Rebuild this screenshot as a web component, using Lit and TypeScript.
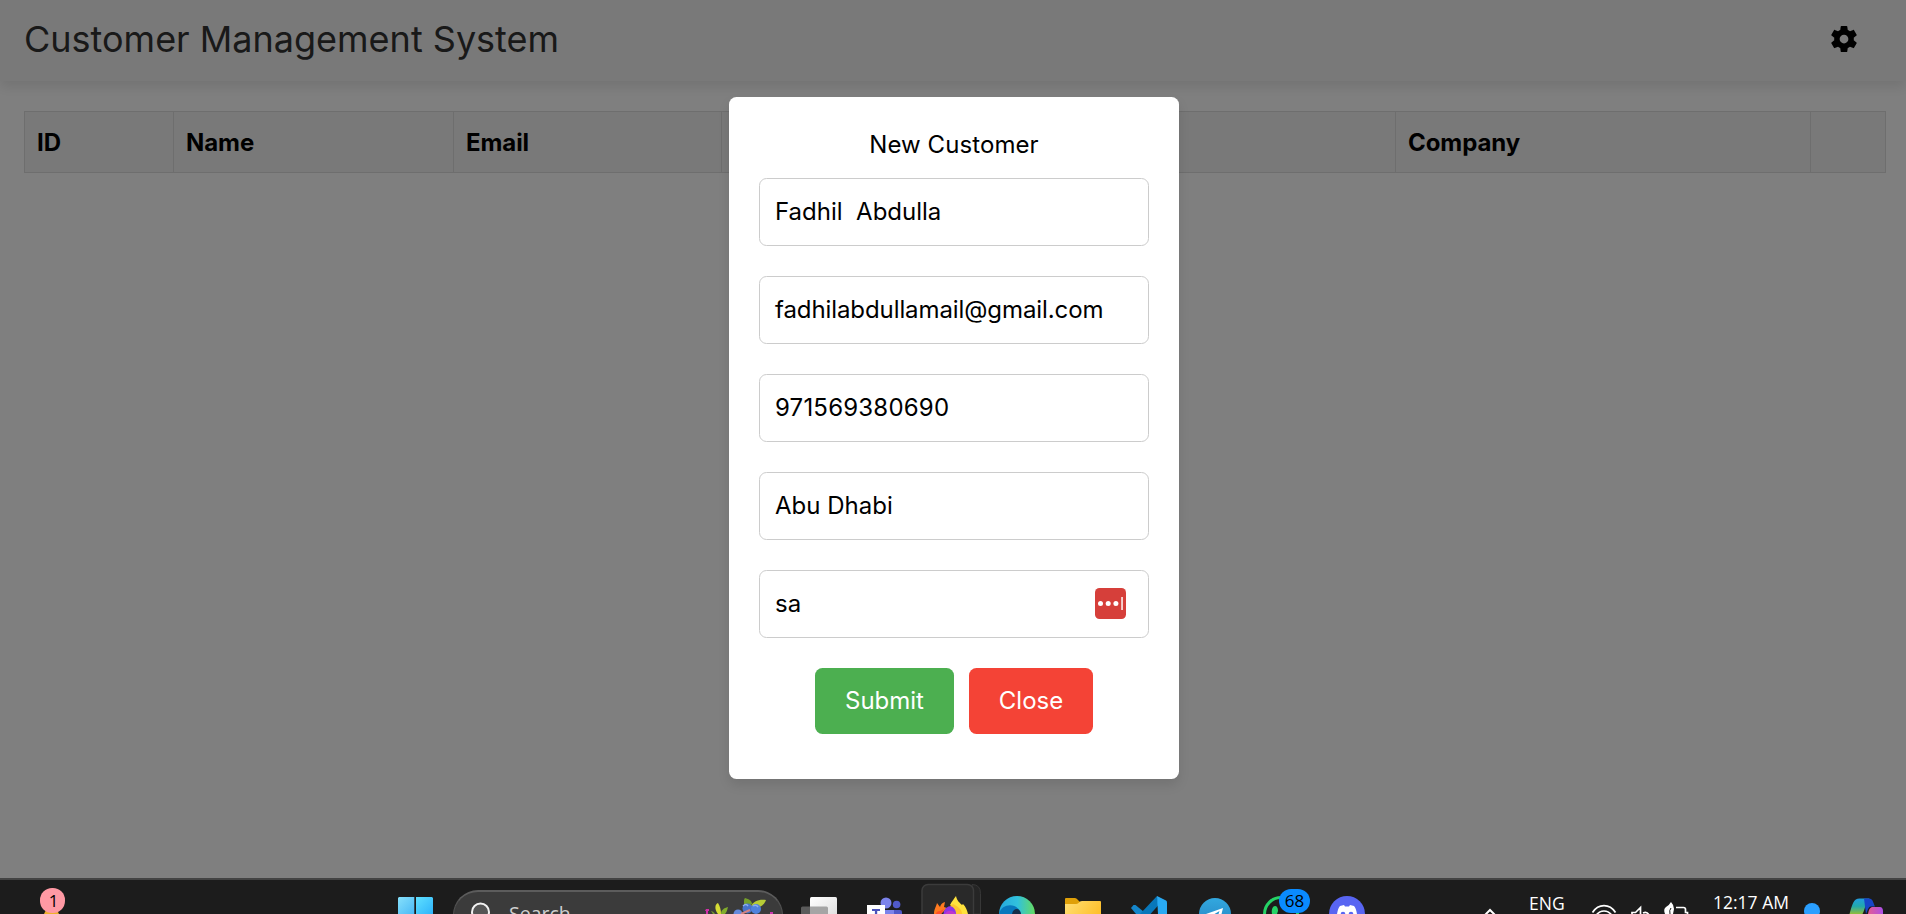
import { LitElement, html, css, svg } from "lit";
import { customElement } from "lit/decorators.js";

@customElement("customer-dialog")
class CustomerDialog extends LitElement {
  static styles = css`
    :host {
      display: block;
      box-sizing: border-box;
      width: 450px;
      height: 682px;
      padding: 30px;
      border-radius: 7.5px;
      background: #fff;
      color: #000;
      box-shadow: 0 6px 12px rgba(0, 0, 0, 0.1);
      font: 24px/36px Inter, sans-serif;
    }
    .title { text-align: center; margin-bottom: 15px; letter-spacing: 0.08px; }
    .fields { display: flex; flex-direction: column; gap: 30px; }
    .field {
      box-sizing: border-box;
      height: 68px;
      display: flex;
      align-items: center;
      justify-content: space-between;
      padding: 0 22px 0 15px;
      border: 1px solid #ccc;
      border-radius: 7.5px;
      white-space: pre;
    }
    .email { letter-spacing: -0.09px; }
    .phone { letter-spacing: 0.2px; }
    .filler { margin-bottom: 1px; }
    .buttons { display: flex; justify-content: center; gap: 15px; margin-top: 30px; }
    .btn {
      display: flex;
      align-items: center;
      justify-content: center;
      width: 139px;
      height: 66px;
      border-radius: 7.5px;
      color: #fff;
      background: #4caf50;
    }
    .close { width: 124px; background: #f44336; }
  `;
  fields = [
    { kind: "name", value: "Fadhil  Abdulla" },
    { kind: "email", value: "fadhilabdullamail@gmail.com" },
    { kind: "phone", value: "971569380690" },
    { kind: "address", value: "Abu Dhabi" },
  ];
  render() {
    return html`
      <div class="title">New Customer</div>
      <div class="fields">
        ${this.fields.map((f) => html`<div class="field ${f.kind}"><span>${f.value}</span></div>`)}
        <div class="field"><span>sa</span><svg class="filler" width="31" height="31" viewBox="0 0 31 31">
          <rect width="31" height="31" rx="4.5" fill="#d63f3a" />
          <circle cx="5.5" cy="15.5" r="2.5" fill="#fff" />
          <circle cx="13.2" cy="15.5" r="2.5" fill="#fff" />
          <circle cx="20.9" cy="15.5" r="2.5" fill="#fff" />
          <rect x="26.2" y="9" width="1.7" height="13" fill="#fbe3e2" />
        </svg></div>
      </div>
      <div class="buttons"><div class="btn">Submit</div><div class="btn close">Close</div></div>
    `;
  }
}

/* Each slot's viewBox keeps taskbar coordinates, so neighbouring slots join up. */
const slot = (x: number, w: number, body: unknown) =>
  html`<svg width=${w} height="34" viewBox="${x} 880 ${w} 34">${body}</svg>`;

@customElement("task-bar")
class TaskBar extends LitElement {
  static styles = css`
    :host {
      display: flex;
      box-sizing: border-box;
      height: 36px;
      overflow: hidden;
      border-top: 2px solid #434343;
      background: #1c1c1c;
      color: #fff;
      font-family: "Open Sans", sans-serif;
    }
    svg { display: block; flex: none; }
    .badged { position: relative; flex: none; height: 34px; }
    .badge {
      position: absolute;
      box-sizing: border-box;
      height: 24px;
      border-radius: 12px;
      color: #000;
      text-align: center;
      font: 17px/24px "Open Sans", sans-serif;
    }
    .alert { left: 40px; top: 8px; width: 25px; height: 25px; background: #ff99a4; line-height: 25px; padding-left: 2px; }
    .unread { left: 39px; top: 9px; width: 31px; background: #0a8bff; }
    .search {
      flex: none;
      box-sizing: border-box;
      display: flex;
      width: 330px;
      height: 50px;
      margin-top: 10px;
      border: 1px solid #505050;
      border-top: 2px solid #5c5c5c;
      border-radius: 25px;
      background: #3b3b3b;
    }
    .query { box-sizing: border-box; width: 195px; padding-top: 9px; margin-left: -1px; color: #cfcfcf; font-size: 19.500px; line-height: 26px; }
    .label { flex: none; height: 34px; font-size: 17.500px; line-height: 24px; white-space: nowrap; }
    .lang { width: 60px; padding-top: 11px; }
    .clock { width: 86px; padding-top: 10px; }
  `;
  render() {
    return html`
      <div class="badged">
        ${slot(0, 398, svg`<path d="M46 910h11l2 4H44z" fill="#eeb02c"/>`)}
        <span class="badge alert">1</span>
      </div>
      ${slot(398, 55, svg`
        <defs><linearGradient id="w" x1="398" y1="897" x2="433" y2="932" gradientUnits="userSpaceOnUse"><stop stop-color="#86e0fb"/><stop offset="1" stop-color="#0a8ff0"/></linearGradient>
        <linearGradient id="w2" x1="416" y1="897" x2="433" y2="914" gradientUnits="userSpaceOnUse"><stop stop-color="#5fe0ff"/><stop offset="1" stop-color="#2fb4fb"/></linearGradient></defs>
        <path d="M399 897h15.3v17H398v-16z" fill="url(#w)"/><path d="M416 897h16l1 1v16h-17z" fill="url(#w2)"/>`)}
      <div class="search">
        <svg width="56" height="22" viewBox="454 892 56 22"><circle cx="480.5" cy="912" r="8.5" fill="#555" stroke="#f2f2f2" stroke-width="2"/></svg>
        <div class="query">Search</div>
        <svg width="77" height="22" viewBox="705 892 77 22">
          <path d="M707 909h3v2h-1v3h-2v-3h-1z" fill="#d02fa8"/>
          <path d="M719 914c-4-5-3-10 0-11 2 3 3 7 3 11z" fill="#d6dc35"/>
          <path d="M722 914c0-4 3-6 7-7-1 4-2 6-3 7z" fill="#82ad2c"/>
          <path d="M716 914c-1-2-3-3-4-3l2 3z" fill="#759b2c"/>
          <path d="M745 904c0-4 0-5 1-6 4 1 7 3 7 6l-4 3z" fill="#759f2b"/>
          <path d="M752 906c2-4 7-7 15-6-2 5-6 8-11 8z" fill="#b7cc36"/>
          <circle cx="739" cy="914" r="4.5" fill="#6489dc"/>
          <circle cx="748.5" cy="908.5" r="5" fill="#4772ca"/>
          <circle cx="757" cy="909" r="5" fill="#4f82dd"/>
          <path d="M744 906q3-3 5 0M754 906q3-2 5 1" fill="none" stroke="#8caef0" stroke-width="1.5"/>
          <path d="M742 914l9-4" stroke="#d38382" stroke-width="2"/>
          <path d="M771 912h3v2h-3z" fill="#ca37b0"/>
        </svg>
      </div>
      ${slot(783, 75, svg`
        <defs><linearGradient id="tv" x1="0" y1="0" x2="1" y2="1"><stop stop-color="#fff"/><stop offset="1" stop-color="#dedede"/></linearGradient></defs>
        <rect x="810" y="897" width="27" height="20" rx="1.5" fill="url(#tv)"/>
        <path d="M802.5 906.5H810v8h-9v-6.500q0-1.500 1.500-1.500z" fill="#5b5b5b"/><path d="M810 906.500h16.500q1.500 0 1.500 1.500v6h-18z" fill="#a5a5a5"/>`)}
      ${slot(858, 60, svg`
        <circle cx="886" cy="903" r="5.500" fill="#7b83eb"/><circle cx="896.600" cy="904.500" r="3.800" fill="#5059c9"/>
        <path d="M879 910h16v4h-16z" fill="#7b83eb"/><path d="M894 910h6q2 0 2 2v2h-8z" fill="#5059c9"/>
        <rect x="867" y="905" width="18" height="12" fill="#fff"/><path d="M872 909h8v2h-2.800v4h-2.300v-4H872z" fill="#4b53bc"/>`)}
      ${slot(918, 72, svg`
        <path d="M972 884.500q8.500 0 8.500 9V914h-8z" fill="#252525" stroke="#373737"/>
        <rect x="922" y="884.500" width="51.500" height="42" rx="6" fill="#292929" stroke="#3b3b3b" stroke-width="1.500"/>
        <path d="M934 914c0-5 2-7 3-11l3 4c1-3 2-4 5-5l-1 5 3 1-6 6z" fill="#ff7a20"/>
        <path d="M936 914c0-2 2-3 4-3l4-2-3 5z" fill="#ff4f28"/>
        <circle cx="951.500" cy="914" r="8" fill="#8e35e6"/><path d="M945 914c2-4 6-4 9-2l2 2z" fill="#bd35cf"/>
        <path d="M950 905c2-4 4-6 6-9 1 5 4 7 6 9l1-1c3 3 4 6 5 10h-12c1-4-1-7-6-9z" fill="#ffe23d"/>
        <path d="M953 904c6 3 9 6 9 10h-6c0-4-2-7-6-8z" fill="#ffc62e"/>`)}
      ${slot(990, 60, svg`
        <defs><linearGradient id="ed" x1="1000" y1="0" x2="1035" y2="0" gradientUnits="userSpaceOnUse"><stop stop-color="#26a9dc"/><stop offset=".5" stop-color="#31c1dd"/><stop offset="1" stop-color="#65db60"/></linearGradient></defs>
        <circle cx="1017" cy="914" r="18" fill="url(#ed)"/>
        <path d="M999 914c3-12 20-11 22 0z" fill="#0878bd"/>
        <path d="M1012 914c1-6 8-7 9 0z" fill="#152e49"/>`)}
      ${slot(1050, 66, svg`
        <defs><linearGradient id="fo" x1="1065" y1="899" x2="1095" y2="920" gradientUnits="userSpaceOnUse"><stop stop-color="#ffe078"/><stop offset="1" stop-color="#ffc02b"/></linearGradient></defs>
        <path d="M1065 914v-15q0-1 1-1h9q1.500 0 2.500 1.500L1080 902h5v4z" fill="#dfa008"/>
        <path d="M1065 904h11q1.500 0 2.500-1l1.500-1.500q.8-.5 2-.5h18q1 0 1 1v13h-36z" fill="url(#fo)"/>`)}
      ${slot(1116, 69, svg`
        <path d="M1131 908l2.500-3h2l11 9H1136z" fill="#1586cb"/>
        <path d="M1140 914l17-18 1.500 9-8 9z" fill="#0877ba"/><path d="M1157 896l9 4.500q1 .5 1 2V914h-9z" fill="#29aaf3"/>`)}
      ${slot(1185, 55, svg`
        <defs><linearGradient id="te" x1="0" y1="0" x2="0" y2="1"><stop stop-color="#32a8df"/><stop offset="1" stop-color="#2481c0"/></linearGradient></defs>
        <circle cx="1215" cy="914" r="16" fill="url(#te)"/><path d="M1206 914l17-6-1.500 6h-3l1-3-5 3z" fill="#fff"/>`)}
      <div class="badged">
        ${slot(1240, 80, svg`
          <circle cx="1281" cy="914" r="16.500" fill="none" stroke="#25d366" stroke-width="3"/>
          <path d="M1272 914c-1-5 1-8 3-8 2 0 3 2 3 5l-1 3z" fill="#25d366"/>`)}
        <span class="badge unread">68</span>
      </div>
      ${slot(1320, 150, svg`
        <circle cx="1347" cy="914" r="18" fill="#5865f2"/>
        <path d="M1337 914q1-6 3-8l4-1 1 1.500h4l1-1.500 4 1q2 2 3 8z" fill="#fff"/>
        <circle cx="1343" cy="914" r="2.300" fill="#5865f2"/><circle cx="1351" cy="914" r="2.300" fill="#5865f2"/>`)}
      ${slot(1470, 59, svg`<path d="M1484 916l6-6 6 6" fill="none" stroke="#fff" stroke-width="2"/>`)}
      <div class="label lang">ENG</div>
      ${slot(1589, 124, svg`
        <g fill="none" stroke="#fff" stroke-width="1.700">
        <path d="M1592.500 912.500q4.500-6.800 11.500-6.800t11.500 6.800M1596 915.500q3-4.500 8-4.500t8 4.500"/>
        <path d="M1632 915v-2.500h3.500l5-5v7.500M1643 913q4-2 6 2"/>
        <path d="M1676 907.500h7.500q2 0 2 2v3h2v3"/></g>
        <path d="M1665 914q-2-5 1-7 3-1.500 5-5 3 3 3 7l-1 5z" fill="#fff"/><path d="M1670 914q-1-4 1-6" fill="none" stroke="#1c1c1c" stroke-width="1"/>`)}
      <div class="label clock">12:17 AM</div>
      ${slot(1799, 107, svg`
        <defs><linearGradient id="co" x1="0" y1="0" x2="0" y2="1"><stop stop-color="#229de0"/><stop offset=".5" stop-color="#21a8ab"/><stop offset="1" stop-color="#91bd3b"/></linearGradient>
        <linearGradient id="cp" x1="0" y1="0" x2="1" y2="0"><stop stop-color="#e45a91"/><stop offset="1" stop-color="#ad50e8"/></linearGradient></defs>
        <circle cx="1812" cy="911" r="8" fill="#2a9fff"/>
        <path d="M1849.500 914c3-10 4-15.500 10-15.500h10c-4 3-4 10-7 15.500z" fill="url(#co)"/>
        <path d="M1864 898.500h5c4 0 4 4 6 8h-4c-3 0-3 4-5 7.500z" fill="#1745c8"/>
        <path d="M1868 914c1-5 2-7 5-7h7c2 0 3 2 3 4v3z" fill="url(#cp)"/>`)}
    `;
  }
}

@customElement("app-root")
class AppRoot extends LitElement {
  static styles = css`
    :host {
      display: flex;
      flex-direction: column;
      height: 914px;
      overflow: hidden;
      background: #fff;
      font-family: Inter, sans-serif;
    }
    .page { position: relative; height: 878px; }
    .header {
      box-sizing: border-box;
      display: flex;
      align-items: flex-start;
      justify-content: space-between;
      height: 81px;
      padding: 16px 41.5px 0 24px;
      background: #f2f2f2;
      box-shadow: 0 6px 12px rgba(0, 0, 0, 0.1);
    }
    .heading { color: #333; font-size: 36px; line-height: 46px; font-weight: 400; }
    .gear { margin-top: 2.2px; }
    .table {
      display: grid;
      grid-template-columns: 149px 280px 268px 674px 415px 76px;
      box-sizing: border-box;
      width: 1862px;
      margin: 30px 0 0 24px;
      border: 1px solid #ddd;
      border-left: 0;
      border-right: 0;
      background: #f2f2f2;
    }
    .cell {
      box-sizing: border-box;
      height: 60px;
      padding-left: 12px;
      border-left: 1px solid #ddd;
      font-weight: 700;
      font-size: 24px;
      line-height: 61px;
      letter-spacing: -0.08px;
    }
    .cell:last-child { border-right: 1px solid #ddd; }
    .overlay {
      position: absolute;
      inset: 0;
      display: flex;
      align-items: center;
      justify-content: center;
      padding: 0 0 2px 2px;
      box-sizing: border-box;
      background: rgba(0, 0, 0, 0.5);
    }
  `;
  render() {
    return html`
      <div class="page">
        <div class="header">
          <div class="heading">Customer Management System</div>
          <svg class="gear" width="42" height="42" viewBox="0 0 24 24">
            <path d="M19.140 12.940c.04-.3.060-.610.060-.940s-.02-.640-.07-.940l2.030-1.580c.18-.14.23-.41.120-.61l-1.920-3.320c-.12-.22-.37-.29-.59-.22l-2.390.96c-.5-.38-1.030-.7-1.620-.94l-.36-2.540c-.04-.24-.24-.41-.48-.41h-3.840c-.24 0-.43.17-.47.41l-.36 2.540c-.59.24-1.130.57-1.620.94l-2.390-.96c-.22-.08-.47 0-.59.22L2.740 8.870c-.12.210-.08.470.12.610l2.030 1.580c-.05.3-.09.630-.09.940s.02.640.070.940l-2.030 1.580c-.18.140-.23.410-.12.610l1.920 3.320c.12.220.370.290.590.220l2.390-.96c.5.380 1.030.7 1.620.940l.36 2.540c.05.240.24.410.48.410h3.840c.24 0 .44-.17.470-.41l.36-2.540c.59-.24 1.130-.56 1.620-.94l2.390.96c.22.080.47 0 .59-.22l1.920-3.320c.12-.22.070-.47-.12-.61l-2.010-1.580z" transform="translate(12 12) scale(.78) translate(-12 -12)"/>
            <circle cx="12" cy="12" r="2.500" fill="#f2f2f2"/>
          </svg>
        </div>
        <div class="table">
          ${["ID", "Name", "Email", "", "Company", ""].map((t) => html`<div class="cell">${t}</div>`)}
        </div>
        <div class="overlay"><customer-dialog></customer-dialog></div>
      </div>
      <task-bar></task-bar>
    `;
  }
}
